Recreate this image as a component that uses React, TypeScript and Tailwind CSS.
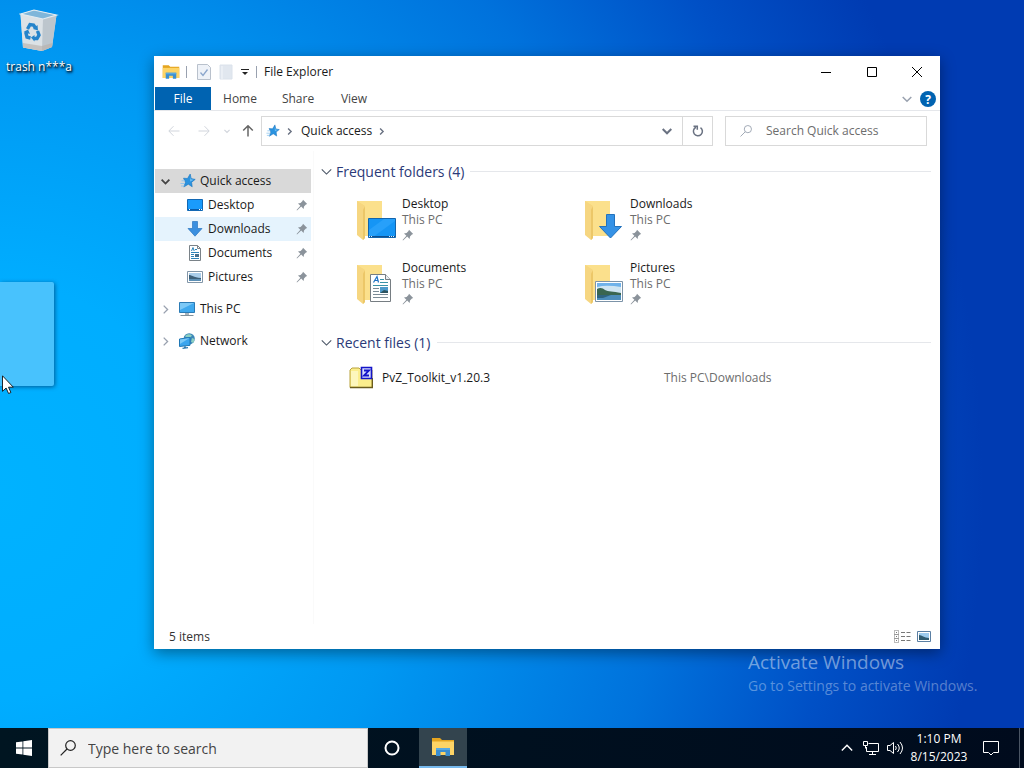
import type { ReactNode } from "react"

type IconProps = { className?: string }

// Icons

const StarIcon = ({ className }: IconProps) => (
  <svg viewBox="0 0 16 16" className={className} aria-hidden="true">
    <path d="m3.500 5.200 4 .3L10.200 1l1 4.600 4 .8-3.600 2.800.6 4.600-3.900-2.600L3.800 14l1.700-4.800Z" fill="#2a93e0" stroke="#1873bd" strokeWidth=".6" />
    <path d="M.5 10.500H5M1 13h3.500M1.500 7.800H5" stroke="#8cc4ee" strokeWidth=".9" />
    <path d="m10 3 .7 3.200 3 .5-3.500 1.700Z" fill="#6fc0f5" />
  </svg>
)

const PinIcon = ({ className }: IconProps) => (
  <svg viewBox="0 0 12 12" className={className} aria-hidden="true">
    <path d="M7 .8 11.200 5l-1.300.5L8 7.400 7.600 10 5.200 7.600 1 11.500.6 11 4.400 6.800 2 4.400 4.600 4l1.900-1.900Z" fill="#8b939b" />
  </svg>
)

const DesktopIcon = ({ className }: IconProps) => (
  <svg viewBox="0 0 16 16" className={className} aria-hidden="true">
    <path d="M.5 2.500h15v11H.5Z" fill="#1a9bfb" stroke="#1268b4" />
    <path d="M1 12.500h14" stroke="#0a5ba8" />
    <path d="M2 12.500h1M12 12.500h1M14 12.500h1" stroke="#fff" />
  </svg>
)

const DownloadIcon = ({ className }: IconProps) => (
  <svg viewBox="0 0 16 16" className={className} aria-hidden="true">
    <path d="M5.500 .5h5v7h4.500L8 15.200 1 7.500h4.500Z" fill="#3a8fdf" stroke="#2a75c0" strokeWidth=".7" />
  </svg>
)

const DocumentIcon = ({ className }: IconProps) => (
  <svg viewBox="0 0 16 16" className={className} aria-hidden="true">
    <path d="M2.500 .5h8l3 3v12h-11Z" fill="#fff" stroke="#7a8288" />
    <path d="M10.500 .5v3h3" fill="none" stroke="#7a8288" />
    <path d="m4.500 6 1.500-3.500L7.200 6M8 4.500h2M4 7.500h8M4 9.500h3M4 11.500h3M4 13.500h8" stroke="#2c83b8" fill="none" />
    <path d="M8 9h4v3H8Z" fill="#476f8c" />
  </svg>
)

const PictureIcon = ({ className }: IconProps) => (
  <svg viewBox="0 0 16 16" className={className} aria-hidden="true">
    <path d="M.5 2.500h15v11H.5Z" fill="#fff" stroke="#8296a8" />
    <path d="M2 4h12v8H2Z" fill="#a9cdea" />
    <path d="M2 6c3 0 4 2.500 12 3v1H2Z" fill="#3d5f78" />
    <path d="M2 10h12v2H2Z" fill="#5c8fb5" />
  </svg>
)

const ComputerIcon = ({ className }: IconProps) => (
  <svg viewBox="0 0 16 16" className={className} aria-hidden="true">
    <path d="M.5 1.500h15v10H.5Z" fill="#3fa9ee" stroke="#2b7bb5" />
    <path d="M1 2h14L1 9Z" fill="#7cc9f7" />
    <path d="M6 12h4v2H6Z" fill="#a8b4bd" />
    <path d="M1.500 14.500h13" stroke="#82909a" />
  </svg>
)

const NetworkIcon = ({ className }: IconProps) => (
  <svg viewBox="0 0 16 16" className={className} aria-hidden="true">
    <circle cx="10.200" cy="5.800" r="5.600" fill="#3c87b8" />
    <path d="M6 3c2-2 5-2.500 7-.5-1 2-3 2-4 1.500S7 5 6 3ZM13 5l2.500 1-1 4-2.500-1Z" fill="#8dcfc2" />
    <path d="M.5 6 11 4.500v7.800L.5 13.500Z" fill="#3ba5ee" stroke="#1f77b5" />
    <path d="M1 6.500 10.500 5 1 11Z" fill="#7cc9f7" />
    <path d="M3.500 15.400 9 14.600M6 13v2" stroke="#2f7bb0" strokeWidth="1.200" />
  </svg>
)

const ExplorerIcon = ({ className }: IconProps) => (
  <svg viewBox="0 0 24 20" className={className} aria-hidden="true">
    <path d="M1 1h8l2 2h12v15H1Z" fill="#e5a520" />
    <path d="M1 4.500h22V18H1Z" fill="#fdd466" />
    <path d="M5 19v-8h14v8h-4.500v-4h-5v4Z" fill="#3b8ed0" />
    <path d="M5 11h14v2H5Z" fill="#57a9e2" />
  </svg>
)

const RecycleBinIcon = ({ className }: IconProps) => (
  <svg viewBox="0 0 40 44" className={className} aria-hidden="true">
    <path d="M1.500 5 15 1l22.500 5L33 38l-10 4-19-3.500Z" fill="#d3dbe2" />
    <path d="M1.500 5 24 10l-1 32L4 38.500Z" fill="#dce2e6" />
    <path d="M24 10 37.500 6 33 38l-10 4Z" fill="#bdc6cd" />
    <path d="M1.500 5 15 1l22.500 5L24 10Z" fill="#7fb6da" stroke="#e3ecf2" strokeWidth="1.200" />
    <path d="M4 34 23 37l10.500-3-.5 4L23 42 4 38.500Z" fill="#b8afa8" opacity=".6" />
    <g fill="none" stroke="#2584cb" strokeWidth="3.400">
      <path d="m8.500 20 2.500-4.500 3.500.5 2 3" />
      <path d="m18.500 22 1.500 4-2 3.500h-3.500" />
      <path d="m11.500 29-3.500-.8-1-4 1-1.500" />
    </g>
    <path d="m18.500 16 .5 5.500-5-1.500ZM15.500 26v6.500l-3.500-4ZM4.500 23l4.500-2.500 2 4.500Z" fill="#2584cb" />
  </svg>
)

const SearchIcon = ({ className }: IconProps) => (
  <svg viewBox="0 0 16 16" className={className} fill="none" stroke="currentColor" strokeWidth="1.200" aria-hidden="true">
    <circle cx="10.500" cy="5.500" r="4.800" />
    <path d="M7 9 .7 15.300" />
  </svg>
)

const Chevron = ({ className }: IconProps) => (
  <svg viewBox="0 0 10 10" className={className} fill="none" stroke="currentColor" aria-hidden="true">
    <path d="m.7 3 4.300 4.300L9.300 3" />
  </svg>
)

const Arrow = ({ className }: IconProps) => (
  <svg viewBox="0 0 12 12" className={className} fill="none" stroke="currentColor" aria-hidden="true">
    <path d="M11.500 6H1M5.500 1.200.8 6l4.700 4.800" />
  </svg>
)

// Large folder with an emblem over its lower right corner
const FolderIcon = ({ children }: { children: ReactNode }) => (
  <svg viewBox="0 0 48 48" className="size-12 shrink-0" aria-hidden="true">
    <path d="M5 5h25v35H11Z" fill="#f7d778" />
    <path d="M5 5h25v35H13V10Z" fill="#fbe08c" />
    <path d="m5 5 8 5.500V42l-2 2-6-5Z" fill="#f6d681" />
    <path d="m13 10.500-2 3V44l2-2Z" fill="#ecc768" />
    {children}
  </svg>
)

const DesktopEmblem = () => (
  <>
    <path d="M16.500 22.500h27v19h-27Z" fill="#1595f5" stroke="#1264ac" />
    <path d="M17 41V34L32 23h11v2L21 41Z" fill="#27a0fa" />
    <path d="M17 40.500h26" stroke="#0d4f8f" />
    <path d="M17 40.500h4M37 40.500h6" stroke="#dcecf9" strokeDasharray="1 1" />
  </>
)

const DownloadEmblem = () => (
  <path d="M26.500 18.500h8v12h7L30.500 42 19.500 30.500h7Z" fill="#3592e6" stroke="#2372bd" />
)

const DocumentEmblem = () => (
  <>
    <path d="M18.500 14.500h15l5 5v22h-20Z" fill="#fff" stroke="#767d82" />
    <path d="M33.500 14.500v5h5" fill="#e9edf0" stroke="#767d82" />
    <path d="m21.500 22.500 3.500-6 1.500 6M23 20.500h3" fill="none" stroke="#2173c4" strokeWidth="1.200" />
    <path d="M28 19.500h4M28 22.500h8M21 25.500h15" stroke="#3a93a8" />
    <path d="M21 28.500h6M21 31.500h6M21 34.500h15M21 37.500h15" stroke="#7b8b96" />
    <path d="M28 27h8v6h-8Z" fill="#4d9acb" />
    <path d="m28 33 4-3 4 1v2Z" fill="#2c5360" />
  </>
)

const PictureEmblem = () => (
  <>
    <path d="M15.500 21.500h27v20h-27Z" fill="#fff" stroke="#7c93a8" />
    <path d="M17 23h24v17H17Z" fill="#6fb2ea" />
    <path d="M17 27c8-2 16-1 24 0v6H17Z" fill="#cfe5f2" />
    <path d="M17 29c3-2 6-1 8 1 3 2 8 1 16 3v2H17Z" fill="#3a6650" />
    <path d="M17 35h24v5H17Z" fill="#4c8dbb" />
    <path d="M17 35h14l-8 3h-6Z" fill="#2f6480" />
  </>
)

// Data

const pinned = [
  { name: "Desktop", Icon: DesktopIcon, hovered: false },
  { name: "Downloads", Icon: DownloadIcon, hovered: true },
  { name: "Documents", Icon: DocumentIcon, hovered: false },
  { name: "Pictures", Icon: PictureIcon, hovered: false },
]

const folders = [
  { name: "Desktop", Emblem: DesktopEmblem },
  { name: "Downloads", Emblem: DownloadEmblem },
  { name: "Documents", Emblem: DocumentEmblem },
  { name: "Pictures", Emblem: PictureEmblem },
]

// Window parts

const TitleBar = () => (
  <header className="flex h-[31px] shrink-0 items-center pl-2">
    <ExplorerIcon className="h-4 w-[18px]" />
    <span className="ml-1.5 h-3 w-px bg-gray-400" />
    <button type="button" aria-label="Properties" className="ml-2.5">
      <svg viewBox="0 0 14 16" className="h-4 w-3.5">
        <path d="M.5 .5h10l3 3v12H.5Z" fill="#eef2f8" stroke="#b9c1cc" />
        <path d="m3.500 8.500 2.500 3 4.500-6" fill="none" stroke="#8ba6cc" strokeWidth="1.300" />
      </svg>
    </button>
    <button type="button" aria-label="New folder" className="ml-2">
      <svg viewBox="0 0 14 16" className="h-4 w-3.5">
        <path d="M1 1h12v14H1Z" fill="#e1e7ef" stroke="#dbe2eb" />
        <path d="M3 2v13" stroke="#f3f6fa" />
      </svg>
    </button>
    <button type="button" aria-label="Customize Quick Access Toolbar" className="ml-2">
      <svg viewBox="0 0 8 8" className="size-2">
        <path d="M0 1.500h8" stroke="#222" />
        <path d="M1 4h6L4 7Z" fill="#222" />
      </svg>
    </button>
    <span className="ml-[7px] h-3 w-px bg-gray-400" />
    <h1 className="ml-[7px] grow">File Explorer</h1>
    <div className="-mr-px flex h-full w-[138px] text-black">
      <button type="button" aria-label="Minimize" className="grid w-[46px] place-items-center">
        <svg viewBox="0 0 10 10" className="size-2.5"><path d="M0 5.500h10" stroke="currentColor" /></svg>
      </button>
      <button type="button" aria-label="Maximize" className="grid w-[45px] place-items-center">
        <svg viewBox="0 0 10 10" className="size-2.5"><path d="M.5 .5h9v9h-9Z" fill="none" stroke="currentColor" /></svg>
      </button>
      <button type="button" aria-label="Close" className="grid w-[46px] place-items-center">
        <svg viewBox="0 0 10 10" className="size-2.5"><path d="m0 0 10 10M10 0 0 10" stroke="currentColor" /></svg>
      </button>
    </div>
  </header>
)

const RibbonTabs = () => (
  <nav className="flex h-6 shrink-0 items-stretch border-b border-gray-200 pl-px">
    <button type="button" className="w-14 bg-[#0063b1] text-white">File</button>
    <button type="button" className="w-[58px] text-[#444]">Home</button>
    <button type="button" className="w-[58px] text-[#444]">Share</button>
    <button type="button" className="w-[54px] text-[#444]">View</button>
    <button type="button" aria-label="Expand the ribbon" className="ml-auto text-gray-400">
      <Chevron className="size-2.5 stroke-[1.500px]" />
    </button>
    <button type="button" aria-label="Help" className="mr-1 ml-2 grid size-4 place-items-center self-center rounded-full bg-[#0063b1] font-bold text-white">
      ?
    </button>
  </nav>
)

const AddressBar = () => (
  <div className="flex h-10 shrink-0 items-center pr-[13px] pl-3.5">
    <button type="button" aria-label="Back" className="text-gray-300"><Arrow className="size-3" /></button>
    <button type="button" aria-label="Forward" className="ml-[18px] text-gray-300"><Arrow className="size-3 rotate-180" /></button>
    <button type="button" aria-label="Recent locations" className="ml-3.5 text-gray-300"><Chevron className="size-1.5 stroke-2" /></button>
    <button type="button" aria-label="Up" className="ml-3 text-[#666]"><Arrow className="size-3 rotate-90 stroke-[1.500px]" /></button>
    <div className="ml-[7px] flex h-[30px] grow items-center border border-[#d9d9d9] pl-1">
      <StarIcon className="size-3.5" />
      <Chevron className="ml-1.5 size-[7px] -rotate-90 stroke-2 text-gray-500" />
      <button type="button" className="ml-2">Quick access</button>
      <Chevron className="ml-1.5 size-[7px] -rotate-90 stroke-2 text-gray-500" />
      <button type="button" aria-label="Previous locations" className="ml-auto grid w-[30px] place-items-center text-gray-500">
        <Chevron className="size-2.5 stroke-2" />
      </button>
      <button type="button" aria-label="Refresh" className="grid h-full w-[30px] place-items-center border-l border-[#d9d9d9] text-gray-500">
        <svg viewBox="0 0 12 12" className="size-3" fill="none" stroke="currentColor" strokeWidth="1.500">
          <path d="M4 2.200a4.500 4.500 0 1 0 4.500.4M1.500 1.200h3.800v3.600" />
        </svg>
      </button>
    </div>
    <label className="ml-3 flex h-[30px] w-[202px] items-center border border-[#d9d9d9] pl-3.5 text-gray-400">
      <SearchIcon className="size-3" />
      <input
        type="search"
        aria-label="Search Quick access"
        placeholder="Search Quick access"
        className="ml-3.5 w-0 grow outline-none placeholder:text-[#6d6d6d]"
      />
    </label>
  </div>
)

const NavigationPane = () => (
  <nav className="w-[160px] shrink-0 border-r border-[#fafafa] pt-[18px] pr-[2px] pl-px">
    <button type="button" className="flex h-6 w-full items-center bg-[#d9d9d9] pl-1.5">
      <Chevron className="size-[9px] stroke-2 text-[#444]" />
      <StarIcon className="ml-2.5 size-4" />
      <span className="ml-1">Quick access</span>
    </button>
    <ul>
      {pinned.map(({ name, Icon, hovered }) => (
        <li key={name}>
          <button type="button" className={`flex h-6 w-full items-center pr-[3px] pl-8 ${hovered ? "bg-[#e5f3fd]" : ""}`}>
            <Icon className="size-4" />
            <span className="ml-[5px]">{name}</span>
            <PinIcon className="ml-auto size-3" />
          </button>
        </li>
      ))}
    </ul>
    <button type="button" className="mt-2 flex h-6 w-full items-center pl-1.5">
      <Chevron className="size-[9px] -rotate-90 stroke-[1.500px] text-gray-400" />
      <ComputerIcon className="ml-[9px] size-4" />
      <span className="ml-[5px]">This PC</span>
    </button>
    <button type="button" className="mt-2 flex h-6 w-full items-center pl-1.5">
      <Chevron className="size-[9px] -rotate-90 stroke-[1.500px] text-gray-400" />
      <NetworkIcon className="ml-[9px] size-4" />
      <span className="ml-[5px]">Network</span>
    </button>
  </nav>
)

const SectionHeading = ({ title }: { title: string }) => (
  <div className="flex h-6 items-center text-[#2b3a78]">
    <Chevron className="size-[11px] text-gray-600" />
    <h2 className="ml-1 text-[14px]">{title}</h2>
    <span className="ml-1.5 h-px grow bg-gray-200" />
  </div>
)

const FileList = () => (
  <main className="grow pt-2 pr-[9px] pl-[7px]">
    <SectionHeading title="Frequent folders (4)" />
    <div className="grid grid-cols-[228px_228px] pt-[13px] pl-[31px]">
      {folders.map(({ name, Emblem }) => (
        <button type="button" key={name} className="flex h-16 items-start text-left">
          <FolderIcon><Emblem /></FolderIcon>
          <span className="ml-0.5 flex flex-col leading-4">
            <span>{name}</span>
            <span className="text-[#6d6d6d]">This PC</span>
            <PinIcon className="mt-px size-3" />
          </span>
        </button>
      ))}
    </div>
    <div className="mt-1.5">
      <SectionHeading title="Recent files (1)" />
    </div>
    <button type="button" className="mt-2.5 flex h-7 w-full items-center pl-7 text-left">
      <svg viewBox="0 0 24 24" className="size-6" aria-hidden="true">
        <path d="M1 21.500V4l2-2h7l2 2h11v17.500Z" fill="#fbee8d" stroke="#b9a23c" />
        <path d="M2 5h7v15H2Z" fill="#fdf7bd" />
        <path d="M1 21.500h22.500V12" fill="none" stroke="#6a5c1e" strokeWidth="1.400" />
        <path d="M12.500 1.500h10v11h-10Z" fill="#d6dcff" stroke="#1414c8" strokeWidth="1.600" />
        <path d="M15 4.500h5L15 9.500h5" fill="none" stroke="#1414c8" strokeWidth="1.800" />
      </svg>
      <span className="ml-[9px] w-[282px]">PvZ_Toolkit_v1.20.3</span>
      <span className="text-[#6d6d6d]">This PC\Downloads</span>
    </button>
  </main>
)

const StatusBar = () => (
  <footer className="flex h-[25px] shrink-0 items-center pr-[9px] pl-[15px] text-[#333]">
    <span>5 items</span>
    <button type="button" aria-label="Details view" className="ml-auto">
      <svg viewBox="0 0 17 14" className="h-3.5 w-[17px]" fill="none" stroke="#777">
        <path d="M.5 .5h4v4h-4ZM.5 4.500h4v4h-4ZM.5 8.500h4v4h-4Z" strokeDasharray="1 1" />
        <path d="M2 2.500h1M2 6.500h1M2 10.500h1M7 2.500h4M12.500 2.500h4M7 6.500h4M12.500 6.500h4M7 10.500h4M12.500 10.500h4" />
      </svg>
    </button>
    <button type="button" aria-label="Large icons view" className="ml-1.5">
      <svg viewBox="0 0 14 12" className="h-3 w-3.5">
        <path d="M.5 .5h13v10H.5Z" fill="#fff" stroke="#5a7fa3" />
        <path d="M2 2h10v7H2Z" fill="#9ccbee" />
        <path d="M2 4c3 0 5 3 10 3v2H2Z" fill="#2f5b70" />
      </svg>
    </button>
  </footer>
)

const ExplorerWindow = () => (
  <section aria-label="File Explorer" className="absolute top-14 right-[84px] bottom-[79px] left-[154px] flex flex-col bg-white shadow-[0_4px_14px_rgba(0,0,0,0.4)]">
    <TitleBar />
    <RibbonTabs />
    <AddressBar />
    <div className="flex min-h-0 grow">
      <NavigationPane />
      <FileList />
    </div>
    <StatusBar />
  </section>
)

const Taskbar = () => (
  <footer className="flex h-10 shrink-0 items-stretch bg-linear-to-r from-[#001521] to-[#000b1d] text-white">
    <button type="button" aria-label="Start" className="grid w-12 place-items-center">
      <svg viewBox="0 0 16 16" className="size-4" fill="#fff">
        <path d="M0 2.300 6.500 1.400v6.200H0ZM7.300 1.300 16 0v7.600H7.300ZM0 8.400h6.500v6.200L0 13.700ZM7.300 8.400H16V16l-8.700-1.300Z" />
      </svg>
    </button>
    <label className="flex w-80 items-center border border-[#c8c8c8] bg-[#f2f2f2] pl-[11px] text-[#222]">
      <SearchIcon className="size-4" />
      <input
        type="search"
        aria-label="Type here to search"
        placeholder="Type here to search"
        className="ml-3 w-0 grow text-[14px] outline-none placeholder:text-[#444]"
      />
    </label>
    <button type="button" aria-label="Cortana" className="grid w-12 place-items-center">
      <svg viewBox="0 0 16 16" className="size-4"><circle cx="8" cy="8" r="6.500" fill="none" stroke="#fff" strokeWidth="2" /></svg>
    </button>
    <button type="button" aria-label="File Explorer" className="ml-[3px] grid w-12 place-items-center border-b-2 border-[#76b9ed] bg-[#33444e]">
      <ExplorerIcon className="h-5 w-6" />
    </button>
    <div className="ml-auto flex items-center">
      <button type="button" aria-label="Show hidden icons">
        <Chevron className="size-3 rotate-180 stroke-[1.200px]" />
      </button>
      <button type="button" aria-label="Network" className="ml-2.5">
        <svg viewBox="0 0 16 16" className="size-4" fill="none" stroke="currentColor">
          <path d="M5.500 3.500h10v8h-12V7M9.500 11.500v3M6 14.500h7M.5 1.500h4v4h-4ZM2.500 5.500v3" />
        </svg>
      </button>
      <button type="button" aria-label="Volume" className="ml-2">
        <svg viewBox="0 0 17 16" className="h-4 w-[17px]" fill="none" stroke="currentColor">
          <path d="M.5 5.500H3l3.500-3v11l-3.500-3H.5Z" />
          <path d="M8.500 6q1.500 2 0 4M10.500 4q3.500 4 0 8M13 2q5 6 0 12" />
        </svg>
      </button>
      <button type="button" className="ml-[5px] w-[60px] text-center leading-[18px]">
        <span className="block">1:10 PM</span>
        <span className="block">8/15/2023</span>
      </button>
      <button type="button" aria-label="Notifications" className="ml-3.5">
        <svg viewBox="0 0 16 16" className="size-4" fill="none" stroke="currentColor">
          <path d="M.5 1.500h15v11h-5L8 15l-2.500-2.500h-5Z" />
        </svg>
      </button>
      <button type="button" aria-label="Show desktop" className="ml-5 h-10 w-[5px] border-l border-[#4a5564]" />
    </div>
  </footer>
)

export default function App() {
  return (
    <div className="flex h-screen flex-col overflow-hidden bg-[radial-gradient(ellipse_96%_135%_at_0%_64%,#00b2ff_0%,#00adff_20%,#0098f2_42%,#0072dc_68%,#0050c6_85%,#003bb2_100%)] font-['Open_Sans','Noto_Sans',sans-serif] text-[12px] text-[#1a1a1a]">
      <div className="relative min-h-0 grow">
        <button type="button" className="absolute top-[9px] left-0 flex w-[78px] flex-col items-center text-white">
          <RecycleBinIcon className="h-11 w-10" />
          <span className="mt-1.5 leading-4 whitespace-nowrap [text-shadow:1px_1px_2px_#000,1px_2px_3px_#002850]">trash n***a</span>
        </button>
        <div className="absolute top-[282px] left-0 h-[104px] w-[54px] rounded-r-xs bg-[#48c2fd] shadow-[1px_1px_4px_rgba(0,60,110,0.7)]" />

        <ExplorerWindow />

        <div className="absolute right-10 bottom-8 w-[236px] whitespace-nowrap">
          <p className="text-[19px] leading-7 text-white/45">Activate Windows</p>
          <p className="text-[14px] leading-5 text-white/35">Go to Settings to activate Windows.</p>
        </div>

        <svg viewBox="0 0 12 19" className="absolute top-[375px] left-0.5 h-[19px] w-3" aria-hidden="true">
          <path d="M.5 .8v15.500l3.600-3.300 2.500 5.500 2.300-1-2.400-5.300h4.800Z" fill="#fff" stroke="#111" strokeWidth=".9" />
        </svg>
      </div>
      <Taskbar />
    </div>
  )
}
